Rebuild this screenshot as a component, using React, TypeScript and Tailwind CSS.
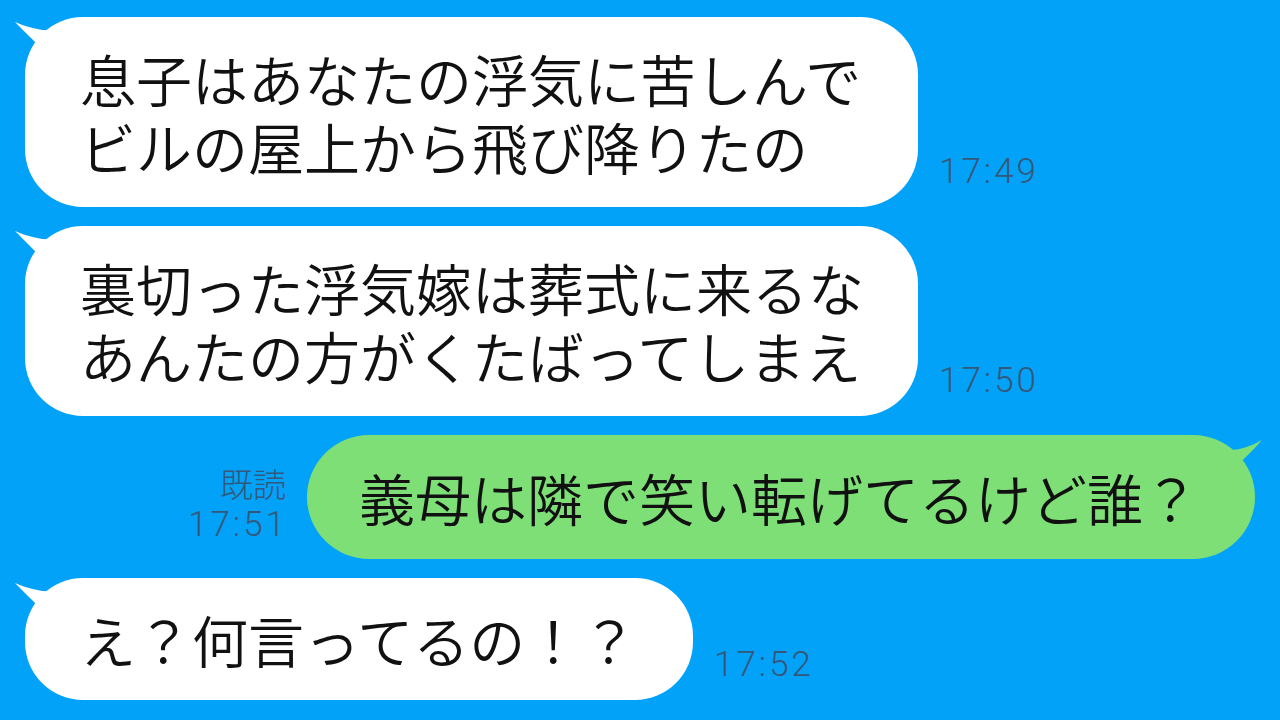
import React from 'react';

const jp = { fontFamily: '"Noto Sans CJK JP", "Noto Sans", sans-serif' };
const num = { fontFamily: 'Roboto, "Noto Sans", sans-serif' };

// tail at top-left of a received bubble
const LeftTail: React.FC = () => (
  <svg className="absolute left-[-12px] top-[3px]" width="60" height="60" viewBox="0 0 60 60">
    <path d="M2 2 C 16 8, 30 12, 50 10 L 40 40 C 30 30, 20 20, 2 2 Z" fill="#ffffff" />
  </svg>
);

const RightTail: React.FC = () => (
  <svg className="absolute right-[-9px] top-[3px]" width="60" height="60" viewBox="0 0 60 60">
    <path d="M58 2 C 44 10, 30 14, 10 12 L 20 40 C 30 30, 42 20, 58 2 Z" fill="#7ddf76" />
  </svg>
);

interface Msg {
  lines: string[];
  time: string;
  width: string;
}

const Received: React.FC<Msg> = ({ lines, time, width }) => (
  <div className="flex items-end">
    <div className={`relative bg-white rounded-[58px] py-[27px] pl-[55px] ${width}`}>
      <LeftTail />
      <div className="relative text-[56px] leading-[68px] font-[350] text-[#111] whitespace-nowrap" style={jp}>
        {lines.map((l) => (
          <div key={l}>{l}</div>
        ))}
      </div>
    </div>
    <div className="ml-[21px] mb-[17px] text-[35px] leading-[36px] font-light tracking-[3px] text-[#34587a]" style={num}>
      {time}
    </div>
  </div>
);

const App: React.FC = () => {
  return (
    <div className="w-[1280px] h-[720px] overflow-hidden bg-[#02a2f9] px-[25px] pt-[17px] flex flex-col gap-[19px]">
      <Received
        lines={['息子はあなたの浮気に苦しんで', 'ビルの屋上から飛び降りたの']}
        time="17:49"
        width="w-[893px]"
      />
      <Received
        lines={['裏切った浮気嫁は葬式に来るな', 'あんたの方がくたばってしまえ']}
        time="17:50"
        width="w-[893px]"
      />

      <div className="flex items-end justify-end">
        <div className="mr-[19px] mb-[13px] flex flex-col items-end text-[#34587a]">
          <span className="text-[33px] leading-[42px] font-light mr-[2px]" style={jp}>既読</span>
          <span className="text-[35px] leading-[42px] font-light tracking-[3px]" style={num}>17:51</span>
        </div>
        <div className="relative bg-[#7ddf76] rounded-[62px] h-[124px] w-[948px] pl-[52px] flex items-center">
          <RightTail />
          <div className="relative text-[56px] leading-[68px] font-[350] text-[#111] whitespace-nowrap" style={jp}>
            義母は隣で笑い転げてるけど誰？
          </div>
        </div>
      </div>

      <Received lines={['え？何言ってるの！？']} time="17:52" width="w-[668px]" />
    </div>
  );
};

export default App;
